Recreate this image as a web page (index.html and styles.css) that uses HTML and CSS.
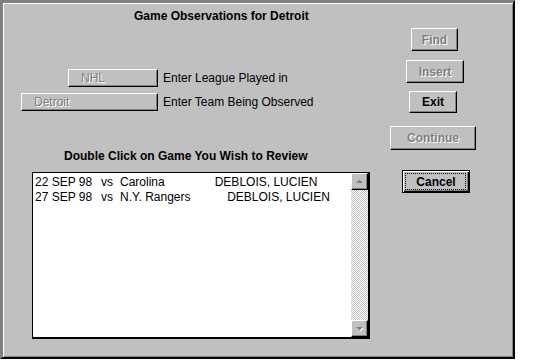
FILE: index.html
```html
<!DOCTYPE html>
<html>

<head>
	<meta charset="UTF-8">
	<meta name="viewport" content="width=device-width, initial-scale=1.0">
	<title>Game Observations</title>
	<link rel="stylesheet" href="styles.css">
</head>

<body>
	<div class="window">
		<h1 class="title">Game Observations for Detroit</h1>

		<div class="main">
			<div class="left">
				<div class="row row-league">
					<div class="field">NHL</div>
					<label>Enter League Played in</label>
				</div>
				<div class="row row-team">
					<div class="field field-team">Detroit</div>
					<label>Enter Team Being Observed</label>
				</div>

				<h2 class="heading">Double Click on Game You Wish to Review</h2>

				<div class="listbox">
					<ul class="games">
						<li><span class="date">22 SEP 98</span><span class="vs">vs</span><span class="team">Carolina               </span>DEBLOIS, LUCIEN</li>
						<li><span class="date">27 SEP 98</span><span class="vs">vs</span><span class="team">N.Y. Rangers           </span>DEBLOIS, LUCIEN</li>
					</ul>
					<div class="scrollbar">
						<div class="arrow">
							<svg width="9" height="5" viewBox="0 0 9 5"><polygon points="1,4 4.5,0.5 8,4" fill="#808080" /></svg>
						</div>
						<div class="track"></div>
						<div class="arrow">
							<svg width="9" height="6" viewBox="0 0 9 6"><polygon points="2,2 9,2 5.5,5.5" fill="#fff" /><polygon points="1,1 8,1 4.5,4.5" fill="#808080" /></svg>
						</div>
					</div>
				</div>
			</div>

			<div class="right">
				<button class="btn btn-find" disabled>Find</button>
				<button class="btn btn-insert" disabled>Insert</button>
				<button class="btn btn-exit">Exit</button>
				<button class="btn btn-continue" disabled>Continue</button>
				<button class="btn btn-cancel default">Cancel</button>
			</div>
		</div>
	</div>
</body>

</html>
```

FILE: styles.css
```css
html {
	box-sizing: border-box;
	font-size: 12px;
}

*,
*:before,
*:after {
	box-sizing: inherit;
}

body,
h1,
h2,
ul {
	margin: 0;
	padding: 0;
	font-weight: normal;
}

body {
	background: #fff;
	font-family: "Liberation Sans", Arial, sans-serif;
	font-size: 12px;
	color: #000;
}

.window {
	width: 515px;
	height: 359px;
	background: #c0c0c0;
	border-top: 3px solid #808080;
	border-left: 3px solid #808080;
	border-right: 2px solid #000;
	border-bottom: 2px solid #000;
	box-shadow: inset 1px 1px 0 #fff, inset -1px -1px 0 #808080, 0 2px 0 #808080;
}

.title {
	margin: 6px 0 0 131px;
	font-size: 12px;
	font-weight: bold;
	line-height: 14px;
}

.main {
	display: flex;
}

.left {
	width: 383px;
}

.row {
	display: flex;
	align-items: center;
	gap: 5px;
	height: 18px;
}

.row-league {
	margin: 46px 0 0 65px;
}

.row-team {
	margin: 6px 0 0 18px;
}

.row label {
	line-height: 18px;
}

.field {
	width: 90px;
	height: 18px;
	padding-left: 12px;
	line-height: 16px;
	color: #808080;
	text-shadow: 1px 1px 0 #fff;
	border: 1px solid;
	border-color: #fff #000 #000 #fff;
	box-shadow: inset -1px -1px 0 #808080;
}

.field-team {
	width: 137px;
}

.heading {
	margin: 38px 0 0 61px;
	font-size: 12px;
	font-weight: bold;
	line-height: 14px;
}

.listbox {
	display: flex;
	width: 338px;
	height: 167px;
	margin: 9px 0 0 29px;
	background: #fff;
	border-top: 1px solid #000;
	border-left: 1px solid #000;
	border-right: 2px solid #000;
	border-bottom: 2px solid #000;
}

.games {
	flex: 1;
	list-style: none;
	padding: 2px 0 0 2px;
}

.games li {
	line-height: 15px;
	white-space: pre;
}

.date {
	display: inline-block;
	width: 66px;
}

.vs {
	display: inline-block;
	width: 19px;
}

.scrollbar {
	display: flex;
	flex-direction: column;
	width: 17px;
}

.arrow {
	display: flex;
	align-items: center;
	justify-content: center;
	height: 17px;
	background: #c0c0c0;
	border: 1px solid;
	border-color: #fff #000 #000 #fff;
	box-shadow: inset -1px -1px 0 #808080;
}

.track {
	flex: 1;
	background: repeating-conic-gradient(#c0c0c0 0 25%, #fff 0 50%) 0 0 / 2px 2px;
}

.right {
	display: flex;
	flex-direction: column;
	align-items: flex-start;
}

.btn {
	position: relative;
	padding: 0;
	font-family: "Liberation Sans", Arial, sans-serif;
	font-size: 12px;
	font-weight: bold;
	color: #000;
	background: #c0c0c0;
	border: 1px solid;
	border-color: #fff #000 #000 #fff;
	box-shadow: inset -1px -1px 0 #808080;
}

.btn:disabled {
	color: #808080;
	text-shadow: 1px 1px 0 #fff;
}

.btn-find {
	width: 47px;
	height: 23px;
	margin: 5px 0 0 25px;
}

.btn-insert {
	width: 58px;
	height: 23px;
	margin: 9px 0 0 20px;
}

.btn-exit {
	width: 48px;
	height: 22px;
	margin: 8px 0 0 23px;
}

.btn-continue {
	width: 86px;
	height: 24px;
	margin: 13px 0 0 4px;
}

.btn-cancel {
	width: 68px;
	height: 23px;
	margin: 20px 0 0 16px;
}

.btn.default {
	border: 1px solid #000;
	box-shadow: inset 1px 1px 0 #fff, inset -1px -1px 0 #000, inset -2px -2px 0 #808080;
}

.btn.default:after {
	content: "";
	position: absolute;
	inset: 2px 3px 2px 2px;
	border: 1px dotted #000;
}
```
